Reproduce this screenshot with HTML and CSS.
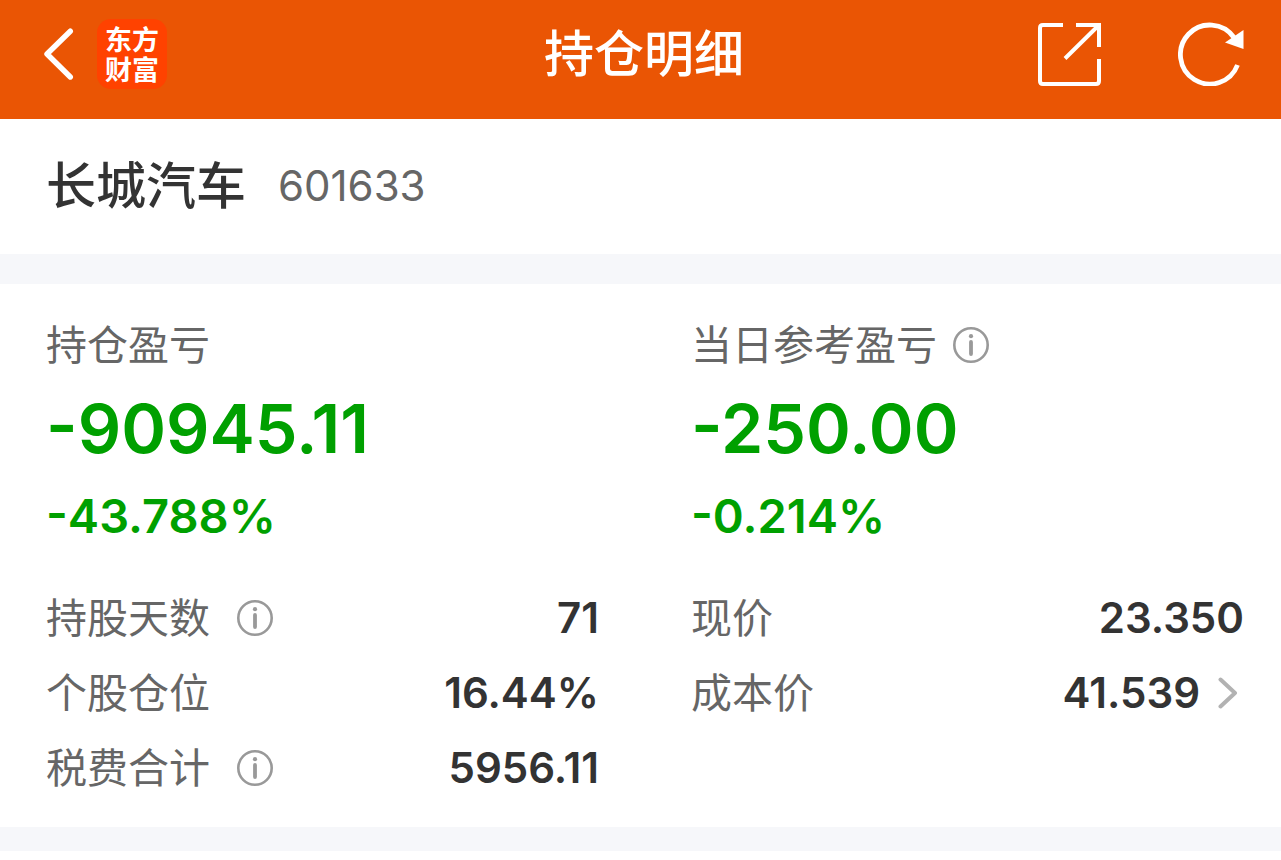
FILE: index.html
```
<!DOCTYPE html>
<html lang="zh-CN">
<head>
  <meta charset="utf-8">
  <meta name="viewport" content="width=device-width, initial-scale=1">
  <title>持仓明细</title>
  <link rel="stylesheet" href="styles.css">
</head>
<body>

<svg class="defs" aria-hidden="true">
  <symbol id="info" viewBox="0 0 36 36">
    <circle cx="18" cy="18" r="16.7" fill="none" stroke="#999" stroke-width="2.6"/>
    <circle cx="18" cy="9.2" r="2.1" fill="#999"/>
    <path d="M18 15V27" stroke="#999" stroke-width="3.8" stroke-linecap="round"/>
  </symbol>
</svg>

<header class="topbar">
  <div class="topbar-left">
    <button class="icon-btn" type="button" aria-label="返回">
      <svg width="30" height="52" viewBox="0 0 30 52" fill="none" stroke="#fff" stroke-width="5.4" stroke-linecap="round" stroke-linejoin="round">
        <path d="M26.3 3.2L3 26L26.3 49"/>
      </svg>
    </button>
    <a class="logo" href="#">东方财富</a>
  </div>
  <h1 class="title">持仓明细</h1>
  <div class="topbar-right">
    <button class="icon-btn" type="button" aria-label="分享">
      <svg width="64" height="64" viewBox="0 0 64 64" fill="none" stroke="#fff" stroke-width="4">
        <path d="M25 3H5Q2 3 2 6V59Q2 62 5 62H58Q61 62 61 59V37"/>
        <path d="M38 3H61V25M60 4L27 36.5"/>
      </svg>
    </button>
    <button class="icon-btn" type="button" aria-label="刷新">
      <svg width="66" height="64" viewBox="0 0 66 64">
        <path d="M59.5 43A29.5 29.5 0 1 1 56 15.5" fill="none" stroke="#fff" stroke-width="4.8"/>
        <path d="M65.5 8V27L47 20.5Z" fill="#fff"/>
      </svg>
    </button>
  </div>
</header>

<main>
  <section class="stock">
    <h2 class="stock-name">长城汽车</h2>
    <span class="stock-code">601633</span>
  </section>

  <section class="detail">
    <div class="column">
      <div class="label">持仓盈亏</div>
      <div class="amount">-90945.11</div>
      <div class="percent">-43.788%</div>
      <dl class="rows">
        <div class="row">
          <dt>持股天数<button class="icon-btn info" type="button" aria-label="持股天数说明"><svg width="36" height="36"><use href="#info"/></svg></button></dt>
          <dd>71</dd>
        </div>
        <div class="row">
          <dt>个股仓位</dt>
          <dd>16.44%</dd>
        </div>
        <div class="row">
          <dt>税费合计<button class="icon-btn info" type="button" aria-label="税费合计说明"><svg width="36" height="36"><use href="#info"/></svg></button></dt>
          <dd>5956.11</dd>
        </div>
      </dl>
    </div>

    <div class="column">
      <div class="label">当日参考盈亏<button class="icon-btn info-near" type="button" aria-label="当日参考盈亏说明"><svg width="36" height="36"><use href="#info"/></svg></button></div>
      <div class="amount">-250.00</div>
      <div class="percent">-0.214%</div>
      <dl class="rows">
        <div class="row">
          <dt>现价</dt>
          <dd>23.350</dd>
        </div>
        <div class="row">
          <dt>成本价</dt>
          <dd>
            <a class="more" href="#">41.539
              <svg width="20" height="32" viewBox="0 0 20 32" fill="none" stroke="#b2b2b2" stroke-width="4" stroke-linecap="round" stroke-linejoin="round">
                <path d="M2.5 2.5L17 16L2.5 29.5"/>
              </svg>
            </a>
          </dd>
        </div>
      </dl>
    </div>
  </section>
</main>

</body>
</html>
```
FILE: styles.css
```
* {
  box-sizing: border-box;
}
body {
  margin: 0;
  background: #fff;
  color: #333;
  font-family: Inter, "Noto Sans CJK SC", sans-serif;
}
h1, h2, dl, dd {
  margin: 0;
}
a {
  color: inherit;
  text-decoration: none;
}
svg {
  display: block;
}
.defs {
  display: none;
}
.icon-btn {
  padding: 0;
  border: 0;
  background: none;
  cursor: pointer;
}

/* top bar */
.topbar {
  display: grid;
  grid-template-columns: 1fr auto 1fr;
  align-items: center;
  height: 119px;
  padding: 0 37px 12px 44px;
  background: #ea5504;
  color: #fff;
}
.topbar-left {
  display: flex;
  align-items: center;
  gap: 23px;
}
.topbar-right {
  display: flex;
  align-items: center;
  justify-content: flex-end;
  gap: 76px;
}
.logo {
  width: 70px;
  height: 70px;
  padding: 5px 8px;
  border-radius: 14px;
  background: #ff4200;
  font-family: "Noto Sans CJK SC", sans-serif;
  font-size: 27px;
  font-weight: 700;
  line-height: 30px;
}
.title {
  font-size: 50px;
  font-weight: 500;
  line-height: 72px;
}

/* stock name */
.stock {
  display: flex;
  align-items: center;
  gap: 32px;
  height: 135px;
  padding: 0 46px 2px;
}
.stock-name {
  font-size: 50px;
  font-weight: 500;
  line-height: 72px;
}
.stock-code {
  color: #666;
  font-size: 42px;
}

/* position detail */
.detail {
  display: grid;
  grid-template-columns: 1fr 1fr;
  column-gap: 92px;
  padding: 30px 37px 22px 46px;
  border-top: 30px solid #f6f7fa;
  border-bottom: 24px solid #f6f7fa;
  box-sizing: content-box;
}
.label {
  display: flex;
  align-items: center;
  color: #666;
  font-size: 41px;
  line-height: 62px;
}
.amount {
  color: #00a000;
  font-size: 68px;
  font-weight: 600;
  line-height: 104px;
}
.percent {
  color: #00a000;
  font-size: 47px;
  font-weight: 600;
  line-height: 72px;
}
.rows {
  margin-top: 28px;
}
.row {
  display: flex;
  align-items: center;
  justify-content: space-between;
  height: 75px;
}
.row dt {
  display: flex;
  align-items: center;
  color: #666;
  font-size: 41px;
  line-height: 62px;
}
.row dd {
  font-size: 42px;
  font-weight: 600;
}
.info {
  margin-left: 27px;
}
.info-near {
  margin-left: 16px;
}
.more {
  display: flex;
  align-items: center;
  gap: 18px;
  padding-right: 6px;
}
```
